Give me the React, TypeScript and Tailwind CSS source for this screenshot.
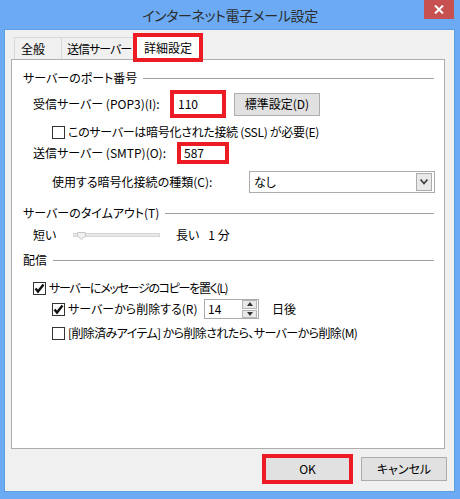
import React from 'react'

const font = "font-['Noto_Sans_CJK_JP','Noto_Sans',sans-serif] [font-feature-settings:'palt']"

function CheckBox({ checked }: { checked?: boolean }) {
  return (
    <div className="w-[13px] h-[13px] border border-[#333333] bg-white flex items-center justify-center shrink-0">
      {checked && (
        <svg width="11" height="11" viewBox="0 0 11 11">
          <path d="M1.5 5.5 L4 8.5 L9.5 1.5" fill="none" stroke="#111" strokeWidth="2.4" />
        </svg>
      )}
    </div>
  )
}

function Section({ title, className }: { title: string; className: string }) {
  return (
    <div className={`flex items-center h-[18px] pl-[11px] pr-[10px] ${className}`}>
      <span className="whitespace-nowrap">{title}</span>
      <div className="flex-1 h-px bg-[#a0a0a0] ml-[6px]" />
    </div>
  )
}

export default function App() {
  return (
    <div className={`w-[460px] h-[499px] bg-[#6cabf4] flex flex-col text-[12px] text-black ${font}`}>
      {/* title bar */}
      <div className="relative h-[29px] flex items-center justify-center">
        <span className="text-[14px] tracking-[-0.4px] text-[#2b2b2b] leading-none">インターネット電子メール設定</span>
        <div className="absolute right-[6px] top-0 w-[30px] h-[19px] bg-[#c75050] flex items-center justify-center">
          <svg width="10" height="9" viewBox="0 0 10 9">
            <path d="M1 0.5 L9 8.5 M9 0.5 L1 8.5" stroke="white" strokeWidth="2" />
          </svg>
        </div>
      </div>

      {/* client area */}
      <div className="ml-[4px] w-[451px] h-[463px] bg-[#f0f0f0] border border-[#5d9de4] flex flex-col">
        {/* tabs */}
        <div className="flex items-end h-[29px] pl-[9px]">
          <div className="h-[22px] w-[48px] border border-[#d9d9d9] border-b-0 bg-[#f0f0f0] flex items-center pl-[6px]">全般</div>
          <div className="h-[22px] w-[73px] border border-[#d9d9d9] border-b-0 border-l-0 bg-[#f0f0f0] flex items-center pl-[5px] tracking-[-1px] whitespace-nowrap">送信サーバー</div>
          <div className="relative h-[29px] w-[70px] -ml-[2px] border-[4px] border-[#ed1c24] bg-white flex items-center justify-center -mb-[3px] z-10">詳細設定</div>
        </div>

        {/* panel */}
        <div className="ml-[6px] w-[434px] h-[390px] bg-white border border-[#adadad] flex flex-col">
          <Section title="サーバーのポート番号" className="mt-[9px]" />

          <div className="flex items-center h-[28px] mt-[3px] pl-[21px]">
            <span className="w-[137px] whitespace-nowrap">受信サーバー (POP3)(I):</span>
            <div className="w-[56px] h-[28px] border-[4px] border-[#ed1c24] flex items-center pl-[4px]">110</div>
            <div className="ml-[8px] w-[86px] h-[23px] bg-[#e1e1e1] border border-[#adadad] flex items-center justify-center">標準設定(D)</div>
          </div>

          <div className="flex items-center h-[18px] mt-[5px] pl-[40px] gap-[3px]">
            <CheckBox />
            <span className="whitespace-nowrap tracking-[-0.3px]">このサーバーは暗号化された接続 (SSL) が必要(E)</span>
          </div>

          <div className="flex items-center h-[22px] mt-[1px] pl-[21px]">
            <span className="w-[144px] whitespace-nowrap">送信サーバー (SMTP)(O):</span>
            <div className="w-[52px] h-[22px] border-[4px] border-[#ed1c24] flex items-center pl-[3px]">587</div>
          </div>

          <div className="flex items-center h-[22px] mt-[7px] pl-[40px]">
            <span className="w-[197px] whitespace-nowrap">使用する暗号化接続の種類(C):</span>
            <div className="w-[186px] h-[22px] border border-[#acacac] bg-white flex items-center pl-[4px] pr-[2px]">
              <span className="flex-1">なし</span>
              <div className="w-[16px] h-[18px] border border-[#acacac] bg-[#e9e9e9] flex items-center justify-center">
                <svg width="8" height="6" viewBox="0 0 8 6">
                  <path d="M0.5 0.5 L4 4.5 L7.5 0.5" fill="none" stroke="#444" strokeWidth="1.8" />
                </svg>
              </div>
            </div>
          </div>

          <Section title="サーバーのタイムアウト(T)" className="mt-[11px]" />

          <div className="flex items-center h-[18px] mt-[4px] pl-[21px]">
            <span className="w-[40px]">短い</span>
            <div className="relative w-[87px] h-[4px] bg-[#e7e7e7] border border-[#d6d6d6]">
              <svg className="absolute left-[3px] -top-[2px]" width="9" height="8" viewBox="0 0 9 8">
                <path d="M0.5 0.5 H8.5 V4 L4.5 7.5 L0.5 4 Z" fill="#f0f0f0" stroke="#c8c8c8" />
              </svg>
            </div>
            <span className="ml-[16px]">長い</span>
            <span className="ml-[9px]">1 分</span>
          </div>

          <Section title="配信" className="mt-[7px]" />

          <div className="flex items-center h-[18px] mt-[10px] pl-[21px] gap-[3px]">
            <CheckBox checked />
            <span className="whitespace-nowrap tracking-[-1.3px]">サーバーにメッセージのコピーを置く(L)</span>
          </div>

          <div className="flex items-center h-[20px] mt-[2px] pl-[40px]">
            <CheckBox checked />
            <span className="ml-[3px] w-[136px] whitespace-nowrap">サーバーから削除する(R)</span>
            <div className="w-[55px] h-[20px] border border-[#acacac] bg-white flex items-center">
              <span className="flex-1 pl-[3px]">14</span>
              <div className="w-[15px] h-[18px] flex flex-col gap-px mr-px">
                <div className="flex-1 bg-[#e9e9e9] border border-[#b5b5b5] flex items-center justify-center">
                  <svg width="6" height="4" viewBox="0 0 6 4"><path d="M0 4 L3 0 L6 4 Z" fill="#333" /></svg>
                </div>
                <div className="flex-1 bg-[#e9e9e9] border border-[#b5b5b5] flex items-center justify-center">
                  <svg width="6" height="4" viewBox="0 0 6 4"><path d="M0 0 L3 4 L6 0 Z" fill="#333" /></svg>
                </div>
              </div>
            </div>
            <span className="ml-[13px]">日後</span>
          </div>

          <div className="flex items-center h-[18px] mt-[5px] pl-[40px] gap-[3px]">
            <CheckBox />
            <span className="whitespace-nowrap tracking-[-0.6px]">[削除済みアイテム] から削除されたら、サーバーから削除(M)</span>
          </div>
        </div>

        {/* buttons */}
        <div className="flex items-center mt-[5px] pl-[257px]">
          <div className="w-[91px] h-[30px] border-[4px] border-[#ed1c24] bg-[#e1e1e1] flex items-center justify-center">OK</div>
          <div className="ml-[8px] w-[86px] h-[24px] bg-[#e1e1e1] border border-[#adadad] flex items-center justify-center">キャンセル</div>
        </div>
      </div>
    </div>
  )
}
